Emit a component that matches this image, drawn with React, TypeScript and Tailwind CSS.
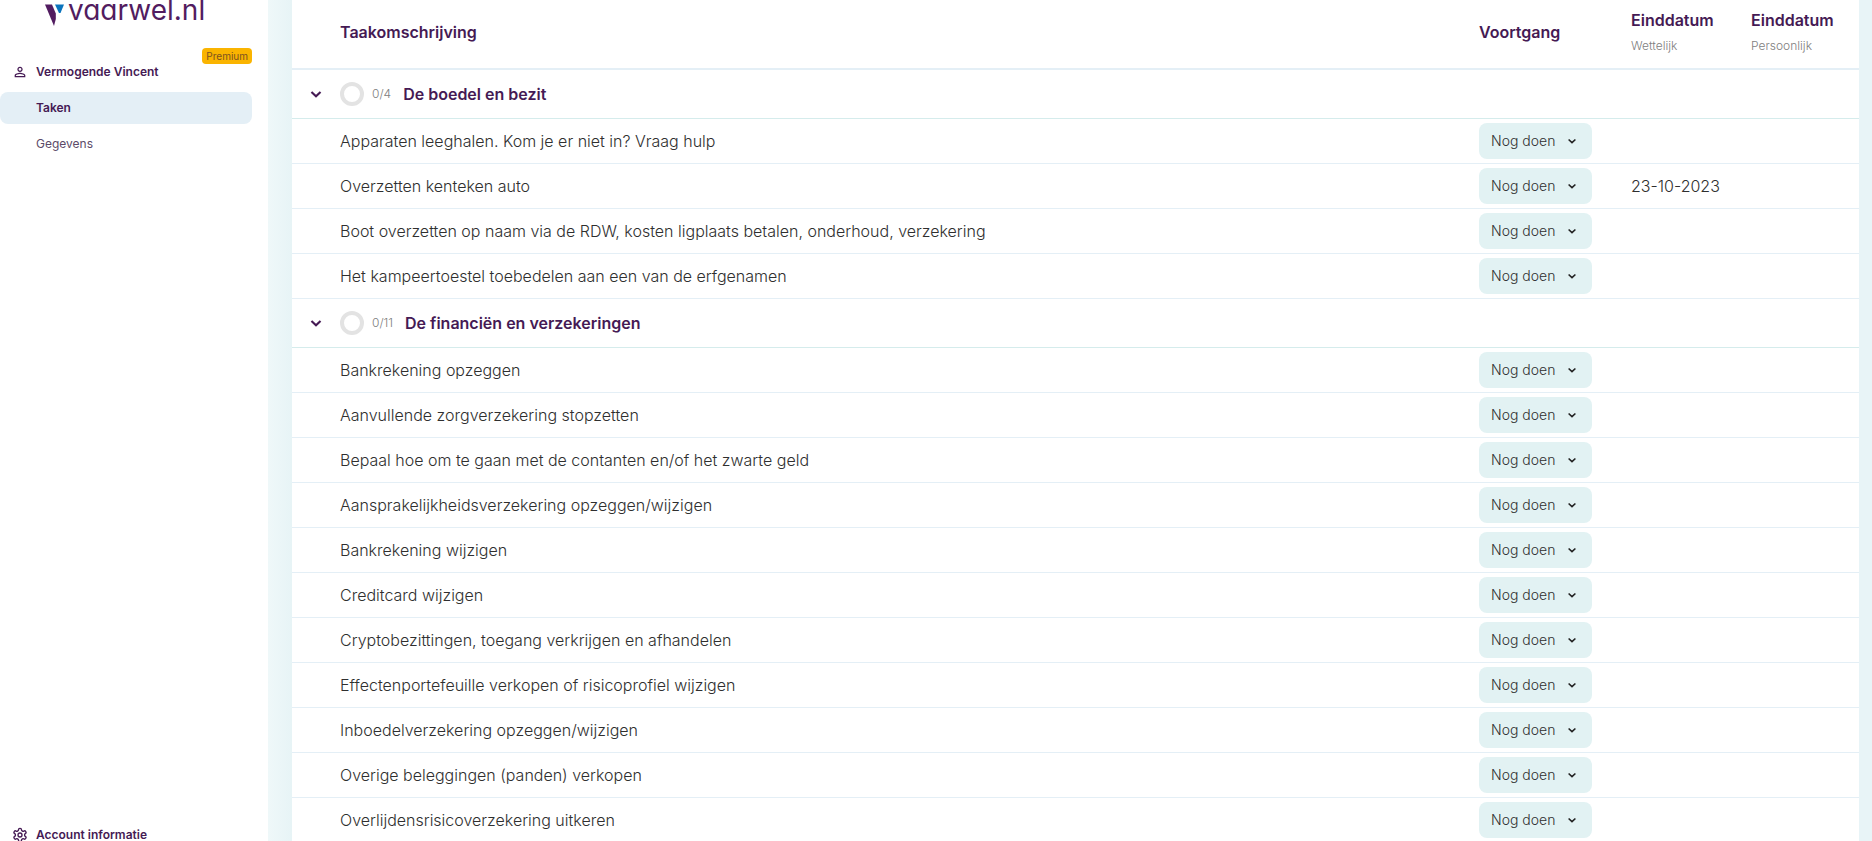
import { useState } from "react";
import { MdPersonOutline } from "react-icons/md";
import { LuSettings } from "react-icons/lu";

type Task = { title: string; legalDate?: string };
type Section = { title: string; tasks: Task[] };

const sections: Section[] = [
    {
        title: "De boedel en bezit",
        tasks: [
            { title: "Apparaten leeghalen. Kom je er niet in? Vraag hulp" },
            { title: "Overzetten kenteken auto", legalDate: "23-10-2023" },
            { title: "Boot overzetten op naam via de RDW, kosten ligplaats betalen, onderhoud, verzekering" },
            { title: "Het kampeertoestel toebedelen aan een van de erfgenamen" },
        ],
    },
    {
        title: "De financiën en verzekeringen",
        tasks: [
            { title: "Bankrekening opzeggen" },
            { title: "Aanvullende zorgverzekering stopzetten" },
            { title: "Bepaal hoe om te gaan met de contanten en/of het zwarte geld" },
            { title: "Aansprakelijkheidsverzekering opzeggen/wijzigen" },
            { title: "Bankrekening wijzigen" },
            { title: "Creditcard wijzigen" },
            { title: "Cryptobezittingen, toegang verkrijgen en afhandelen" },
            { title: "Effectenportefeuille verkopen of risicoprofiel wijzigen" },
            { title: "Inboedelverzekering opzeggen/wijzigen" },
            { title: "Overige beleggingen (panden) verkopen" },
            { title: "Overlijdensrisicoverzekering uitkeren" },
        ],
    },
];

function Chevron({ className }: { className: string }) {
    return (
        <svg viewBox="0 0 24 24" fill="none" stroke="currentColor" className={className} aria-hidden="true">
            <path d="M5.2 9l6.8 6.4L18.8 9" strokeWidth="3.2" />
        </svg>
    );
}

function Logo() {
    return (
        <a href="#" className="flex items-start gap-1 pl-11 text-[#521c60]">
            <svg viewBox="0 0 20 24" className="mt-1 h-6 w-5" aria-hidden="true">
                <path d="M1 .5h7l3.8 9v5.500L10 22z" fill="#521c60" />
                <path d="M11 .5h9L16.500 9h-1.500z" fill="#0b74bd" />
            </svg>
            <span className="-mt-1 text-[28px] leading-7 [font-feature-settings:'cv11']">vaarwel.nl</span>
        </a>
    );
}

function Sidebar() {
    return (
        <aside className="flex w-67 shrink-0 flex-col bg-white text-xs text-[#451a54]">
            <div className="h-12">
                <Logo />
            </div>
            <div className="flex justify-end pr-4">
                <span className="h-4 rounded-sm bg-[#fab400] px-1 text-[10px] leading-4 text-[#7a5220]">Premium</span>
            </div>
            <nav className="flex flex-1 flex-col">
                <a href="#" className="-mt-1 flex h-6 items-center gap-2 pl-3 font-semibold">
                    <MdPersonOutline className="size-4" />
                    Vermogende Vincent
                </a>
                <a href="#" aria-current="page" className="mt-2 mr-4 flex h-8 items-center rounded-lg bg-[#e4eff6] pl-9 font-semibold">
                    Taken
                </a>
                <a href="#" className="mt-1 mr-4 flex h-8 items-center pl-9 text-[#5c4a68]">
                    Gegevens
                </a>
                <a href="#" className="mt-auto -mb-1 flex h-5 items-center gap-2 pl-3 font-semibold">
                    <LuSettings className="size-4" />
                    Account informatie
                </a>
            </nav>
        </aside>
    );
}

function StatusSelect({ label }: { label: string }) {
    return (
        <div className="relative w-[113px]">
            <select
                aria-label={label}
                className="block h-9 w-full appearance-none rounded-lg bg-[#e2f2f3] pl-3 text-sm font-light text-[#2f2f2f]"
            >
                <option>Nog doen</option>
                <option>Bezig</option>
                <option>Klaar</option>
            </select>
            <Chevron className="pointer-events-none absolute top-3 right-3.5 size-3 text-[#222]" />
        </div>
    );
}

function SectionRows({ section }: { section: Section }) {
    const [open, setOpen] = useState(true);

    return (
        <tbody>
            <tr>
                <th colSpan={4} className="h-[49px] border-b border-[#d5ecec] pl-4 text-left">
                    <div className="flex items-center">
                        <button type="button" aria-label={section.title} aria-expanded={open} onClick={() => setOpen(!open)}>
                            <Chevron className={open ? "size-4" : "size-4 -rotate-90"} />
                        </button>
                        <span className="ml-4 size-6 rounded-full border-4 border-[#e3e3e3]" />
                        <span className="ml-2 text-xs font-light text-[#808080]">0/{section.tasks.length}</span>
                        <span className="ml-3 font-semibold">{section.title}</span>
                    </div>
                </th>
            </tr>
            {open &&
                section.tasks.map((task) => (
                    <tr key={task.title} className="font-light text-[#2f2f2f]">
                        <td className="h-[45px] border-b border-[#e4eff6] pl-12">{task.title}</td>
                        <td className="border-b border-[#e4eff6]">
                            <StatusSelect label={task.title} />
                        </td>
                        <td className="border-b border-[#e4eff6]">{task.legalDate}</td>
                        <td className="border-b border-[#e4eff6]" />
                    </tr>
                ))}
        </tbody>
    );
}

export default function App() {
    return (
        <div className="flex h-screen overflow-hidden bg-[#e8f4f7] font-['Inter',sans-serif]">
            <Sidebar />
            <div className="w-6 shrink-0 bg-linear-to-r from-[#eff8f9] to-[#e7f4f6]" />
            <main className="min-w-0 flex-1 overflow-hidden pr-[13px]">
                <table className="w-full table-fixed border-separate border-spacing-0 bg-white text-base text-[#451a54]">
                    <colgroup>
                        <col />
                        <col className="w-[152px]" />
                        <col className="w-[120px]" />
                        <col className="w-[108px]" />
                    </colgroup>
                    <thead>
                        <tr className="text-left">
                            <th className="h-[70px] border-b-2 border-[#e4eff6] pb-1 pl-12 font-semibold">Taakomschrijving</th>
                            <th className="border-b-2 border-[#e4eff6] pb-1 font-semibold">Voortgang</th>
                            <th className="border-b-2 border-[#e4eff6] pb-1 font-semibold">
                                Einddatum
                                <span className="mt-1 block text-xs leading-5 font-light text-[#808080]">Wettelijk</span>
                            </th>
                            <th className="border-b-2 border-[#e4eff6] pb-1 font-semibold">
                                Einddatum
                                <span className="mt-1 block text-xs leading-5 font-light text-[#808080]">Persoonlijk</span>
                            </th>
                        </tr>
                    </thead>
                    {sections.map((section) => (
                        <SectionRows key={section.title} section={section} />
                    ))}
                </table>
            </main>
        </div>
    );
}
